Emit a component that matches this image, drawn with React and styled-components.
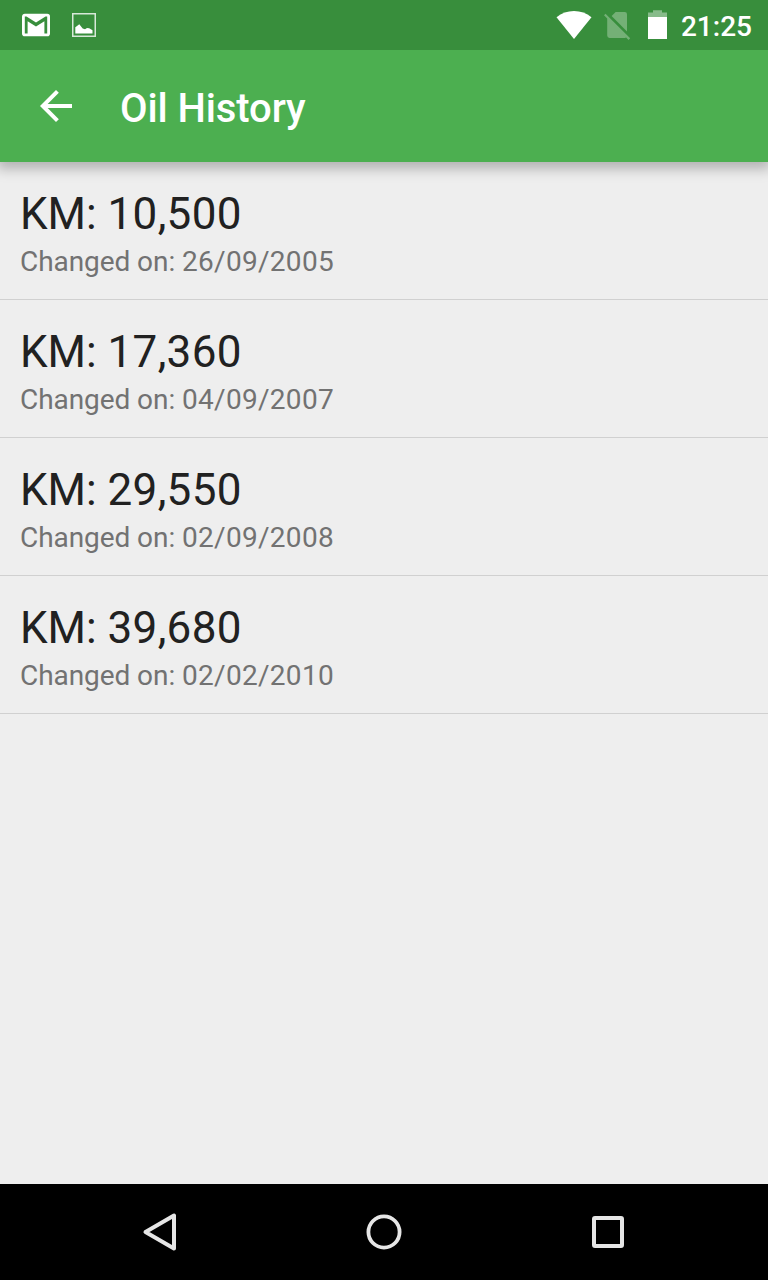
import React from 'react'
import styled, { createGlobalStyle } from 'styled-components'

const GlobalStyle = createGlobalStyle`
    * {
        box-sizing: border-box;
    }
    body {
        margin: 0;
        background-color: #eeeeee;
        font-family: Roboto, "Noto Sans", sans-serif;
    }
`;

const Container = styled.div`
    display: flex;
    flex-direction: column;
    height: 100vh;
    background-color: #eeeeee;
    overflow: hidden;
`;
const StatusBar = styled.div`
    display: flex;
    align-items: center;
    justify-content: space-between;
    height: 50px;
    padding: 0 16px 0 22px;
    background-color: #388e3c;
    color: white;
`;
const StatusIcons = styled.div`
    display: flex;
    align-items: center;
    height: 50px;
    gap: ${({ $gap }) => $gap}px;
`;
const Battery = styled.svg`
    margin-left: 4px;
`;
const Clock = styled.span`
    margin-left: 1px;
    padding-top: 3px;
    font-size: 28px;
    font-weight: 500;
    line-height: 33px;
`;
const Toolbar = styled.header`
    display: flex;
    align-items: center;
    gap: 40px;
    height: 112px;
    padding: 0 32px;
    background-color: #4caf50;
    color: white;
    z-index: 1;
    box-shadow: 0 4px 12px 3px rgba(0, 0, 0, 0.25);
    clip-path: inset(0 0 -24px 0);
`;
const BackButton = styled.button`
    display: flex;
    padding: 0;
    border: none;
    background: none;
    color: inherit;
    cursor: pointer;
`;
const Title = styled.h1`
    margin: 0;
    padding-top: 6px;
    font-size: 40px;
    font-weight: 500;
    line-height: 48px;
    letter-spacing: -0.1px;
`;
const List = styled.ul`
    flex: 1;
    margin: 0;
    padding: 0;
    list-style: none;
`;
const Item = styled.li`
    display: flex;
    flex-direction: column;
    gap: 5px;
    height: 138px;
    padding: 26px 20px 0;
    border-bottom: 1px solid #d0d0d0;
`;
const Distance = styled.span`
    font-size: 44px;
    line-height: 52px;
    color: #212121;
`;
const ChangedOn = styled.span`
    font-size: 28px;
    line-height: 33px;
    letter-spacing: -0.07px;
    color: #727272;
`;
const Digits = styled.span`
    letter-spacing: 0.3px;
`;
const NavBar = styled.nav`
    display: flex;
    height: 96px;
    padding: 0 48px;
    background-color: black;
`;
const NavButton = styled.button`
    display: flex;
    flex: 1;
    align-items: center;
    justify-content: center;
    padding: 0;
    border: none;
    background: none;
    color: #e6e6e6;
    cursor: pointer;
`;

const GmailIcon = () => (
    <svg width="28" height="24" viewBox="2 3.43 20 17.14" fill="#fff">
        <path d="M20 18h-2V9.250L12 13 6 9.250V18H4V6h1.200l6.800 4.250L18.800 6H20m0-2H4c-1.110 0-2 .890-2 2v12a2 2 0 0 0 2 2h16a2 2 0 0 0 2-2V6a2 2 0 0 0-2-2z" />
    </svg>
)

const PictureIcon = () => (
    <svg width="24" height="50" viewBox="0 0 24 50">
        <rect x="0.750" y="13.750" width="22.500" height="22.500" fill="none" stroke="#fff" strokeOpacity="0.8" strokeWidth="1.500" />
        <path d="M3.300 33.500v-6.200l1.700-1.400 2.300-1.600 3.400 4.200 2.300 0.800 2-1.300 2.200 0.300 3.300 2v3.200z" fill="#fff" />
    </svg>
)

const WifiIcon = () => (
    <svg width="36" height="50" viewBox="0 0 36 50">
        <path d="M18 39L0.500 17.200C5.500 13.100 11.500 11 18 11s12.500 2.100 17.500 6.200z" fill="#fff" />
    </svg>
)

const NoSimIcon = () => (
    <svg width="28" height="50" viewBox="0 0 28 50" fill="#fff" fillOpacity="0.3">
        <path d="M7.600 16L11.600 12h9.100a2.300 2.300 0 0 1 2.300 2.300v17.100z" />
        <path d="M0 15.300l1.500-1.500L26.200 38.300l-1.600 1.600-2.500-2.300a2.300 2.300 0 0 1-1.400 0.400H5.600a2.400 2.400 0 0 1-2.400-2.400V18.500z" />
    </svg>
)

const BatteryIcon = () => (
    <Battery width="20" height="50" viewBox="0 0 20 50">
        <path d="M0 17v-4.500h5V10.300h9v2.200h5V17z" fill="#fff" fillOpacity="0.4" />
        <path d="M0 17h19v22H0z" fill="#fff" />
    </Battery>
)

const history = [
    { km: '10,500', date: '26/09/2005' },
    { km: '17,360', date: '04/09/2007' },
    { km: '29,550', date: '02/09/2008' },
    { km: '39,680', date: '02/02/2010' },
]

const App = () => {
    return (
        <Container>
            <GlobalStyle />
            <StatusBar>
                <StatusIcons $gap={22}>
                    <GmailIcon />
                    <PictureIcon />
                </StatusIcons>
                <StatusIcons $gap={12}>
                    <WifiIcon />
                    <NoSimIcon />
                    <BatteryIcon />
                    <Clock>21:25</Clock>
                </StatusIcons>
            </StatusBar>
            <Toolbar>
                <BackButton aria-label="Back">
                    <svg width="48" height="48" viewBox="0 0 24 24" fill="currentColor">
                        <path d="M20 11H7.830l5.590-5.590L12 4l-8 8 8 8 1.410-1.410L7.830 13H20v-2z" />
                    </svg>
                </BackButton>
                <Title>Oil History</Title>
            </Toolbar>
            <List>
                {history.map((item) => (
                    <Item key={item.date}>
                        <Distance>KM: <Digits>{item.km}</Digits></Distance>
                        <ChangedOn>Changed on: <Digits>{item.date}</Digits></ChangedOn>
                    </Item>
                ))}
            </List>
            <NavBar>
                <NavButton aria-label="Back">
                    <svg width="40" height="40" viewBox="0 0 40 40" fill="none" stroke="currentColor" strokeWidth="4" strokeLinejoin="round">
                        <path d="M34 3.500v33L5.500 20z" />
                    </svg>
                </NavButton>
                <NavButton aria-label="Home">
                    <svg width="40" height="40" viewBox="0 0 40 40" fill="none" stroke="currentColor" strokeWidth="3.800">
                        <circle cx="20" cy="20" r="15.600" />
                    </svg>
                </NavButton>
                <NavButton aria-label="Recent apps">
                    <svg width="40" height="40" viewBox="0 0 40 40" fill="none" stroke="currentColor" strokeWidth="4">
                        <rect x="6" y="6" width="28" height="28" rx="1" />
                    </svg>
                </NavButton>
            </NavBar>
        </Container>
    )
}

export default App
